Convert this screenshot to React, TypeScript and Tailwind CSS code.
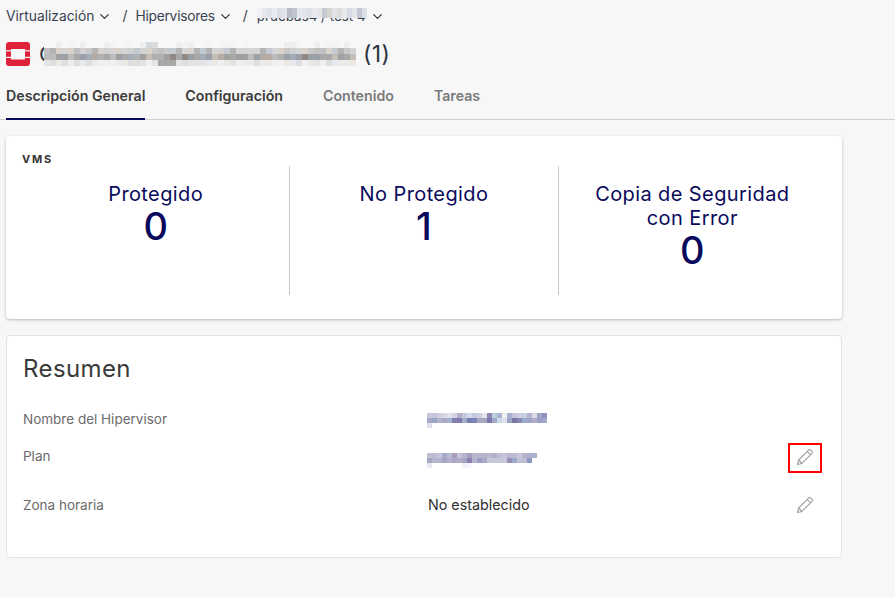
import React from "react";
import { ChevronDown } from "lucide-react";

function Rows({ rows, cell, className }: { rows: string[]; cell: number; className?: string }) {
  const parsed = rows.map((r) => r.split(" "));
  const w = Math.max(...parsed.map((r) => r.length)) * cell;
  const h = parsed.length * cell;
  return (
    <svg width={w} height={h} viewBox={`0 0 ${w} ${h}`} preserveAspectRatio="none" className={`block ${className ?? ""}`} shapeRendering="crispEdges">
      {parsed.map((r, y) =>
        r.map((c, x) => (c === "-" ? null : <rect key={x + "-" + y} x={x * cell} y={y * cell} width={cell} height={cell} fill={"#" + c} />)),
      )}
    </svg>
  );
}

function noise(seed: number, n: number, colors: string[]) {
  let s = seed;
  const out: string[] = [];
  for (let i = 0; i < n; i++) {
    s = (s * 9301 + 49297) % 233280;
    out.push(colors[Math.floor((s / 233280) * colors.length)]);
  }
  return out;
}

const hyper = [
  "c8c8dc c4c4d8 cfcfdf d8d8e8 e2e2ee d4d4e4 b4aecb c0cbdc d4d8e8 c4c8dc d0d0e0 e4e4ee 8f86b4 b8d0d8 a8b4d0 f0f0ee a8b0d4 c8c4d8 ccd0e4 c4d0e0 b4b4cc dcd8e4 a0a4c8 8f90bc",
  "a8a8c8 9ca4c4 b4b4cc a8acc8 a4b0cc 8480b0 7c7cac a4acc8 7880b4 7c84b8 a8a8c4 a8a8c4 8078ac a4acc8 c8d8e8 dce0ec a0a4c4 7878ac 8888b4 9ca8c8 a0a4c4 b0aecc 9ca0c4 a4a8cc",
  "e0e0ec",
];
const plan = [
  "c0c0d4 c0bcd4 c4c8d8 a8a8cc b8b8d0 ac9cbc c4c4d8 b4b4cc ac9cc0 bcb4cc b8b8cc b8b4cc bcb8d0 b0b0cc c0c0d4 c4c4d8 b8b8d0 bcbcd0 c8c8dc b4b4cc b0b0cc a8b0d0",
  "a8a8c4 b4b4cc b4b4d0 a8a4c4 b4b0cc a8a8c8 b0acc8 a4a4c4 8c80b0 b4b4d0 9c9cc4 a8a8cc c8c8dc c8c8dc c8c8d8 c8c8dc 9890bc 9ca8cc c0c0d4 c0bcd0 8c98c4 -",
  "e8e8f2 - - - - - - f6eef4 f4f6fb - - - - - - - - - - - - -",
];
const titleLight = ["f0f0f0", "ebebeb", "e4e4e4", "ece8e4", "e6eaee", "dedede"];
const titleMid = ["d0d0d0", "c8c8c8", "c0c0c0", "d8d2ca", "c4cad2", "d4d4d4", "b4b4b4"];
const titleDark = ["a0a0a0", "a8a8a8", "b0b0b0", "9aa0a6", "a4acb8", "b4aca4", "c4beb4", "908884", "bcbcbc"];
const titleTop = noise(3, 52, ["f7f7f7", "f7f7f7", "f4f4f4", "eeeeee"]);
titleTop[17] = "d4d8dc";
titleTop[18] = "dcdcdc";
const titleBottom = noise(29, 52, titleLight);
titleBottom[19] = "a8a8a8";
titleBottom[20] = "a8a8a8";
titleBottom[21] = "a8a8a8";
const titleRows = [
  titleTop.join(" "),
  noise(5, 52, titleMid).join(" "),
  noise(17, 52, titleDark).join(" "),
  titleBottom.join(" "),
];
const crumbRows = [
  "f0f2f6 e6e8ee dfe2e8 e8ecf2 dcdee4 e2e4ea b8bcc8 c0c4d0 e6e8ee e2e4e8 dde0e6 e8eaee e4e6ea c8cad2 d8d4d0 e4e4e8 dcdcdc e6e8ec d8dce4 e2e6ea c4c8d4 dce0e8",
];

function Pencil() {
  return (
    <svg width="18" height="18" viewBox="0 0 18 18" fill="none" stroke="#a3a3a3" strokeWidth="1.2" strokeLinejoin="round">
      <path d="M1.5 16.5 L2.6 12 L12.8 1.8 Q13.6 1 14.4 1.8 L16.2 3.6 Q17 4.4 16.2 5.2 L6 15.4 Z" />
      <path d="M11.2 3.4 L14.6 6.8" />
      <path d="M2.6 12 L6 15.4" />
    </svg>
  );
}

function Crumb({ children }: { children: React.ReactNode }) {
  return (
    <span className="flex items-center gap-[3px]">
      {children}
      <ChevronDown size={15} strokeWidth={2} className="text-[#333]" />
    </span>
  );
}

function Stat({ label, value, divider }: { label: React.ReactNode; value: string; divider?: boolean }) {
  return (
    <div className={`flex-1 flex flex-col items-center text-center text-[#0a0a5c] ${divider ? "border-r border-[#c8c8c8]" : ""}`}>
      <div className="text-[20px] leading-[24px] mt-[16px] tracking-[0.4px]">{label}</div>
      <div className="text-[38px] leading-[42px] -mt-[1px] font-medium">{value}</div>
    </div>
  );
}

function Row({ label, value, edit, className }: { label: string; value: React.ReactNode; edit?: React.ReactNode; className?: string }) {
  return (
    <div className={`flex items-start ${className ?? ""}`}>
      <div className="w-[404px] text-[13.5px] leading-[18px] text-[#6b6b6b]">{label}</div>
      <div className="flex-1 text-[14.3px] leading-[18px] text-[#2f2f2f]">{value}</div>
      {edit}
    </div>
  );
}

export default function App() {
  return (
    <div className="w-[895px] h-[597px] overflow-hidden bg-[#f7f7f7] font-['Inter',sans-serif]">
      <div className="flex items-center px-[6px] pt-[8px] h-[25px] text-[13.8px] text-[#3a4350]">
        <Crumb>Virtualización</Crumb>
        <span className="ml-[10px] mr-[8px]">/</span>
        <Crumb><span className="tracking-[-0.25px]">Hipervisores</span></Crumb>
        <span className="ml-[10px] mr-[9px]">/</span>
        <Crumb>
          <span className="relative w-[110px] whitespace-nowrap text-[13.4px]">
            pruebas4 / test 4
            <Rows rows={crumbRows} cell={5} className="absolute left-0 top-[2px] h-[10px] w-[110px]" />
          </span>
        </Crumb>
      </div>
      <div className="flex items-center px-[6px] mt-[13px] h-[32px]">
        <svg width="24" height="24" viewBox="0 0 24 24">
          <rect width="24" height="24" rx="3" fill="#e0213a" />
          <rect x="5" y="7" width="14" height="10.5" fill="#f7f7f7" />
          <rect x="0" y="8.2" width="5" height="1.2" fill="#f7f7f7" />
          <rect x="19" y="8.2" width="5" height="1.2" fill="#f7f7f7" />
          <rect x="0" y="14.8" width="5" height="1.2" fill="#f7f7f7" />
          <rect x="19" y="14.8" width="5" height="1.2" fill="#f7f7f7" />
        </svg>
        <span className="ml-[9px] text-[22px] text-[#2a3540]">C</span>
        <Rows rows={titleRows} cell={6} className="-ml-[11px]" />
        <span className="ml-[7px] text-[23px] tracking-[0.4px] text-[#2a3540]">(1)</span>
      </div>
      <div className="mt-[10px] h-[40px] border-b border-[#cfcfcf] flex gap-[40px] px-[6px] text-[14.2px] font-semibold">
        <div className="h-[40px] border-b-2 border-[#0a0a5c] pt-[5px] text-[#3b3b3b]">Descripción General</div>
        <div className="pt-[5px] text-[#3b3b3b]">Configuración</div>
        <div className="pt-[5px] text-[#7a7a7a]">Contenido</div>
        <div className="pt-[5px] text-[#7a7a7a]">Tareas</div>
      </div>

      <div className="ml-[6px] w-[836px] mt-[16px] h-[183px] bg-white rounded shadow-[0_1px_3px_rgba(0,0,0,0.25)] px-[16px] pt-[17px]">
        <div className="text-[11px] leading-[13px] font-bold tracking-[1.8px] text-[#333]">VMS</div>
        <div className="flex h-[129px]">
          <Stat label="Protegido" value="0" divider />
          <Stat label="No Protegido" value="1" divider />
          <Stat label={<>Copia de Seguridad<br />con Error</>} value="0" />
        </div>
      </div>

      <div className="ml-[6px] w-[836px] mt-[16px] h-[223px] bg-white rounded border border-[#e2e2e2] px-[16px] pt-[18px]">
        <div className="text-[24px] leading-[30px] tracking-[0.4px] text-[#3a3a3a]">Resumen</div>
        <Row className="mt-[26px]" label="Nombre del Hipervisor" value={<Rows rows={hyper} cell={5} className="mt-[3px] -mb-[3px]" />} />
        <Row
          className="mt-[19px]"
          label="Plan"
          value={<Rows rows={plan} cell={5} className="mt-[6px]" />}
          edit={
            <div className="w-[34px] h-[30px] mr-[3px] pb-[2px] flex items-center justify-center -mt-[4px] border-2 border-[#ff0000]">
              <Pencil />
            </div>
          }
        />
        <Row
          className="mt-[23px]"
          label="Zona horaria"
          value={<span className="ml-[1px]">No establecido</span>}
          edit={
            <div className="w-[34px] h-[30px] mr-[3px] flex items-center justify-center -mt-[6px]">
              <Pencil />
            </div>
          }
        />
      </div>
    </div>
  );
}
